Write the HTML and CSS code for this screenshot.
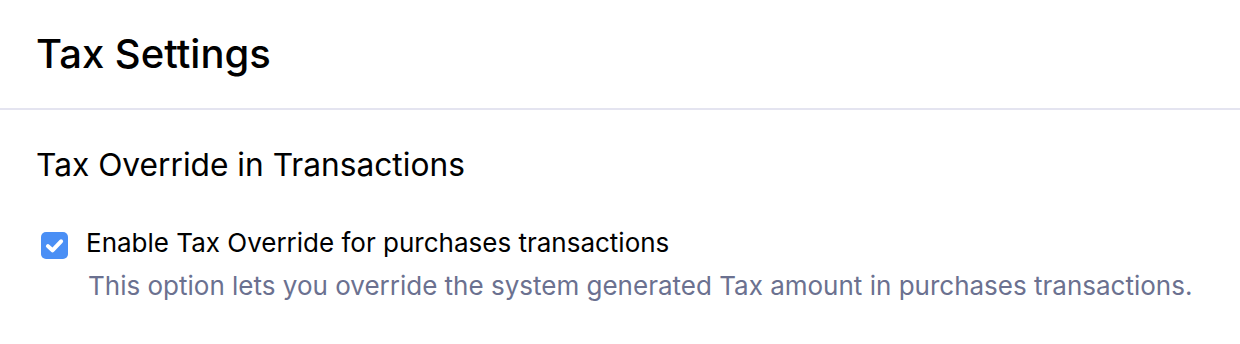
FILE: index.html
```html
<!DOCTYPE html>
<html>
<head>
<meta charset="utf-8">
<link rel="stylesheet" href="styles.css">
</head>
<body>
<div class="page">
  <header class="header">
    <h1 class="title">Tax Settings</h1>
  </header>
  <section class="section">
    <h2 class="section-title">Tax Override in Transactions</h2>
    <div class="option">
      <span class="checkbox">
        <svg viewBox="0 0 16 16"><path d="M3.8 8.4 L6.7 11.1 L12.2 5.3" fill="none" stroke="#fff" stroke-width="2.6" stroke-linecap="round" stroke-linejoin="round"/></svg>
      </span>
      <div class="option-text">
        <div class="option-label">Enable Tax Override for purchases transactions</div>
        <div class="option-desc">This option lets you override the system generated Tax amount in purchases transactions.</div>
      </div>
    </div>
  </section>
</div>
</body>
</html>
```
FILE: styles.css
```css
html, body {
  margin: 0;
  padding: 0;
  background: #fff;
}
body {
  font-family: Inter, "Noto Sans", sans-serif;
  color: #000;
}
.header {
  padding: 30px 36px;
  border-bottom: 2px solid #e4e4f0;
}
.title {
  margin: 0;
  font-size: 40px;
  font-weight: 500;
  line-height: 48px;
}
.section {
  padding: 35px 36px 0;
}
.section-title {
  margin: 0;
  font-size: 31.7px;
  font-weight: 400;
  line-height: 40px;
}
.option {
  display: flex;
  gap: 18px;
  margin-top: 42px;
  padding-left: 5px;
}
.checkbox {
  flex: none;
  width: 27px;
  height: 27px;
  border-radius: 5px;
  background: #4a8ff5;
  display: flex;
  align-items: center;
  justify-content: center;
  margin-top: 5px;
}
.checkbox svg {
  width: 25px;
  height: 25px;
}
.option-label {
  font-size: 26px;
  line-height: 32px;
}
.option-desc {
  font-size: 26px;
  line-height: 32px;
  color: #6b7190;
  margin-top: 11px;
  padding-left: 2px;
}
```
